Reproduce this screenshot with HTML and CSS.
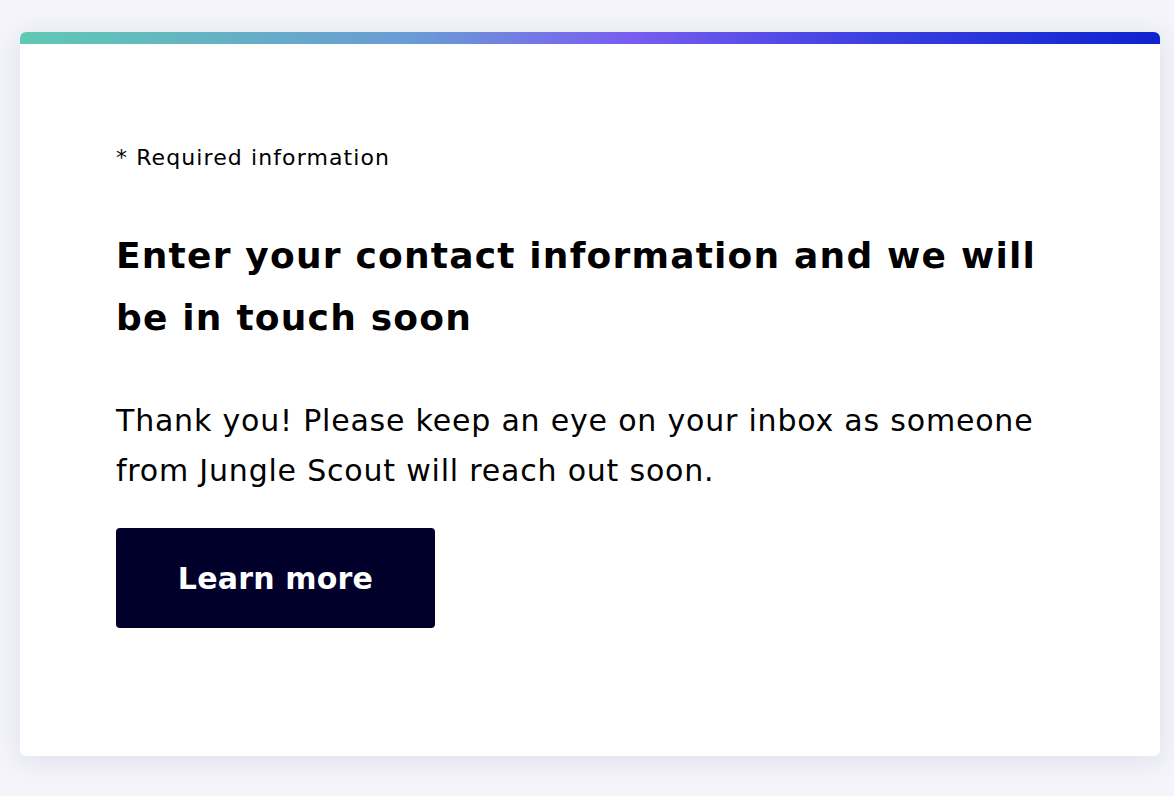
FILE: index.html
```html
<!DOCTYPE html>
<html lang="en">
<head>
<meta charset="utf-8">
<title>Contact</title>
<link rel="stylesheet" href="styles.css">
</head>
<body>
<main class="card">
  <div class="bar"></div>
  <div class="content">
    <p class="required">* Required information</p>
    <h1 class="title">Enter your contact information and we will be in touch soon</h1>
    <p class="message">Thank you! Please keep an eye on your inbox as someone from Jungle Scout will reach out soon.</p>
    <a class="button" href="#">Learn more</a>
  </div>
</main>
</body>
</html>
```
FILE: styles.css
```css
html, body {
  margin: 0;
  padding: 0;
}
body {
  background: #f4f4fa;
  padding: 32px 14px 40px 20px;
  font-family: "DejaVu Sans", "Liberation Sans", sans-serif;
  color: #000;
}
.card {
  background: #fff;
  border-radius: 6px;
  height: 724px;
  box-shadow: 0 4px 28px rgba(40, 40, 110, 0.1);
  overflow: hidden;
  display: flex;
  flex-direction: column;
}
.bar {
  height: 12px;
  flex: none;
  background: linear-gradient(90deg, #5fc9b3 0%, #6a9ad6 35%, #7a5ef0 53%, #3b3fe0 75%, #0d23cf 100%);
}
.content {
  padding: 99px 96px 0 96px;
  display: flex;
  flex-direction: column;
  align-items: flex-start;
}
.required {
  margin: 0;
  font-size: 22px;
  line-height: 30px;
  letter-spacing: 1.1px;
}
.title {
  margin: 52px 0 0 0;
  font-size: 36px;
  line-height: 62px;
  font-weight: 700;
  letter-spacing: 1.2px;
}
.message {
  margin: 47px 0 0 0;
  font-size: 30px;
  line-height: 50px;
  letter-spacing: 0.8px;
}
.button {
  margin-top: 32px;
  width: 319px;
  height: 100px;
  border-radius: 4px;
  background: #00002a;
  color: #fff;
  text-decoration: none;
  font-size: 30px;
  font-weight: 700;
  letter-spacing: 0.2px;
  display: flex;
  align-items: center;
  justify-content: center;
}
```
